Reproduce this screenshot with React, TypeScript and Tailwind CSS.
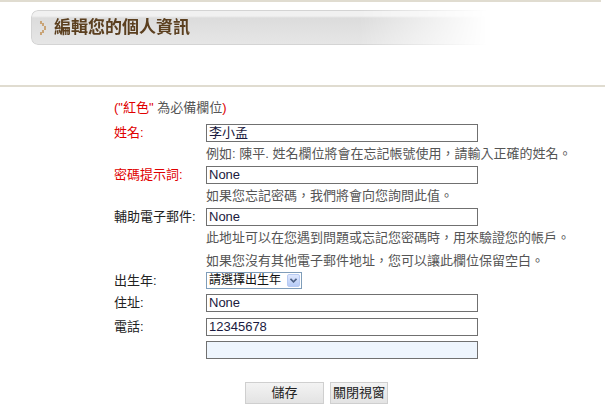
import React from "react";

const font = "font-['Liberation_Sans','Noto_Sans_CJK_TC',sans-serif]";

function Chevron() {
  return (
    <svg width="6" height="14" viewBox="0 0 6 14" className="shrink-0">
      <g fill="#c9a477">
        <rect x="0" y="0" width="2" height="3" />
        <rect x="2" y="2" width="2" height="3" />
        <rect x="4" y="5" width="2" height="4" />
        <rect x="2" y="9" width="2" height="3" />
        <rect x="0" y="11" width="2" height="3" />
      </g>
    </svg>
  );
}

function Field({
  label,
  required,
  value,
  blank
}: {
  label?: string;
  required?: boolean;
  value?: string;
  blank?: boolean;
}) {
  return (
    <div className="flex h-[18px] items-center">
      <div className={`w-[92px] ${required ? "text-[#e00000]" : "text-[#222]"}`}>
        {label ? `${label}:` : ""}
      </div>
      <input
        readOnly
        value={value ?? ""}
        className={`h-[18px] w-[272px] border border-[#707070] px-[2px] text-[13px] text-[#1a1a40] outline-none ${
          blank ? "bg-[#eef5fd]" : "bg-white"
        }`}
      />
    </div>
  );
}

function Hint({ children, h }: { children: React.ReactNode; h: string }) {
  return (
    <div className={`flex items-center whitespace-nowrap pl-[92px] text-[#555] ${h}`}>{children}</div>
  );
}

export default function App() {
  return (
    <div className={`min-h-[419px] w-[605px] bg-white text-[13px] ${font}`}>
      <div className="h-[2px] w-[601px] bg-[#e0dcd0]" />

      <div className="ml-[31px] mt-[8px] flex h-[35px] w-[456px] items-center gap-[8px] rounded-l-[7px] border-y border-l border-[#d4d4d4] bg-[linear-gradient(to_bottom,#f1f1f1_0px,#f1f1f1_5px,#dcdcdc_7px,#e6e6e6_100%)] pl-[8px] [mask-image:linear-gradient(to_right,#000_72%,transparent_100%)]">
        <Chevron />
        <h1 className="text-[17px] font-bold text-[#5b3f1f]">編輯您的個人資訊</h1>
      </div>

      <div className="mt-[40px] h-[2px] w-full bg-[#e0dcd0]" />

      <form className="pl-[114px] pt-[13px]">
        <div className="flex h-[16px] items-center">
          <span className="text-[#e00000]">(&quot;紅色&quot;</span>
          <span className="text-[#555]">&nbsp;為必備欄位</span>
          <span className="text-[#e00000]">)</span>
        </div>

        <div className="mt-[8px]">
          <Field label="姓名" required value="李小孟" />
        </div>
        <Hint h="h-[24px]">例如: 陳平. 姓名欄位將會在忘記帳號使用，請輸入正確的姓名。</Hint>
        <Field label="密碼提示詞" required value="None" />
        <Hint h="h-[24px]">如果您忘記密碼，我們將會向您詢問此值。</Hint>
        <Field label="輔助電子郵件" value="None" />
        <Hint h="h-[23px]">此地址可以在您遇到問題或忘記您密碼時，用來驗證您的帳戶。</Hint>
        <Hint h="h-[23px]">如果您沒有其他電子郵件地址，您可以讓此欄位保留空白。</Hint>

        <div className="flex h-[17px] items-center">
          <div className="w-[92px] text-[#222]">出生年:</div>
          <div className="flex h-[17px] w-[96px] items-center justify-between whitespace-nowrap border border-[#7f9db9] bg-white pl-[2px] pr-[1px] text-[#111]">
            <span className="text-[12px] leading-[15px]">請選擇出生年</span>
            <span className="flex h-[13px] w-[13px] shrink-0 items-center justify-center rounded-[2px] border border-[#b8cbf3] bg-[linear-gradient(to_bottom,#dfe8fd,#b6cbf7)]">
              <svg width="7" height="5" viewBox="0 0 7 5">
                <path d="M0.5 0.8 L3.5 3.8 L6.5 0.8" fill="none" stroke="#4d6185" strokeWidth="1.6" />
              </svg>
            </span>
          </div>
        </div>

        <div className="mt-[5px]">
          <Field label="住址" value="None" />
        </div>
        <div className="mt-[6px]">
          <Field label="電話" value="12345678" />
        </div>
        <div className="mt-[5px]">
          <Field blank />
        </div>
      </form>

      <div className="ml-[245px] mt-[23px] flex gap-[6px]">
        <button
          type="button"
          className="h-[22px] w-[79px] border border-[#cfcfcf] bg-[linear-gradient(to_bottom,#f3f3f3,#e3e3e3)] text-[13px] text-[#222]"
        >
          儲存
        </button>
        <button
          type="button"
          className="h-[22px] w-[58px] border border-[#cfcfcf] bg-[linear-gradient(to_bottom,#f3f3f3,#e3e3e3)] text-[13px] text-[#222]"
        >
          關閉視窗
        </button>
      </div>
    </div>
  );
}
